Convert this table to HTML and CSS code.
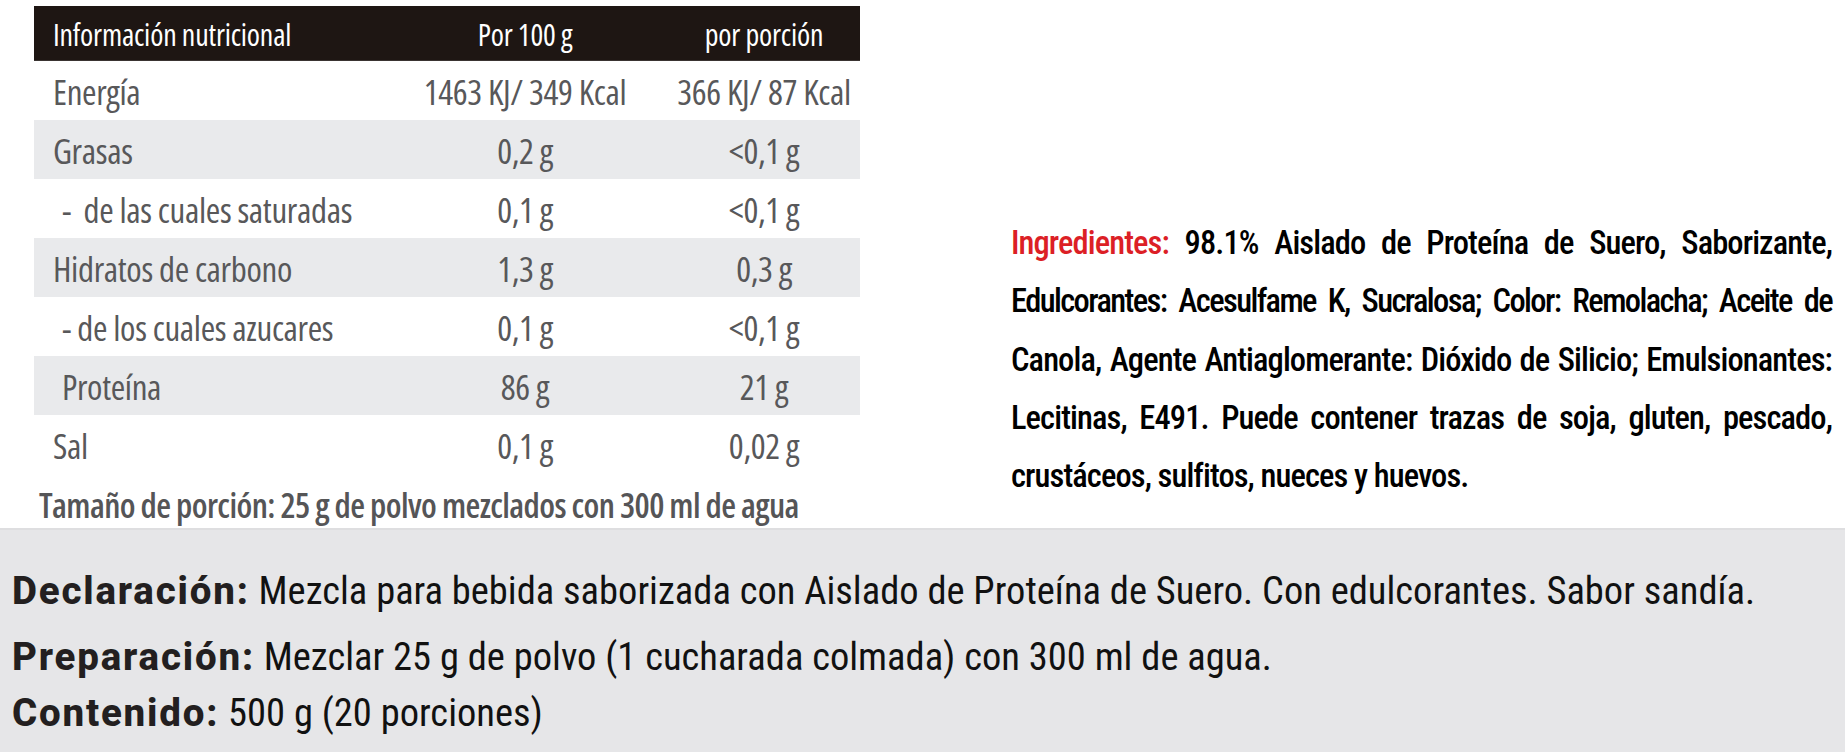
FILE: index.html
```html
<!DOCTYPE html>
<html lang="es">
<head>
<meta charset="utf-8">
<title>Información nutricional</title>
<link rel="stylesheet" href="styles.css">
</head>
<body>
<main class="top">
  <section class="nutri">
    <div class="table">
      <div class="row head"><span class="c1">Información nutricional</span><span class="c2">Por 100 g</span><span class="c3">por porción</span></div>
      <div class="row"><span class="c1">Energía</span><span class="c2">1463 KJ/ 349 Kcal</span><span class="c3">366 KJ/ 87 Kcal</span></div>
      <div class="row alt"><span class="c1">Grasas</span><span class="c2">0,2 g</span><span class="c3">&lt;0,1 g</span></div>
      <div class="row"><span class="c1 sub">-&nbsp; de las cuales saturadas</span><span class="c2">0,1 g</span><span class="c3">&lt;0,1 g</span></div>
      <div class="row alt"><span class="c1">Hidratos de carbono</span><span class="c2">1,3 g</span><span class="c3">0,3 g</span></div>
      <div class="row"><span class="c1 sub">- de los cuales azucares</span><span class="c2">0,1 g</span><span class="c3">&lt;0,1 g</span></div>
      <div class="row alt"><span class="c1 sub">Proteína</span><span class="c2">86 g</span><span class="c3">21 g</span></div>
      <div class="row"><span class="c1">Sal</span><span class="c2">0,1 g</span><span class="c3">0,02 g</span></div>
    </div>
    <p class="serving">Tamaño de porción: 25 g de polvo mezclados con 300 ml de agua</p>
  </section>
  <section class="ingr">
    <p class="ingr-text">
      <span class="line"><span class="red">Ingredientes:</span> 98.1% Aislado de Proteína de Suero, Saborizante,</span>
      <span class="line tight">Edulcorantes: Acesulfame K, Sucralosa; Color: Remolacha; Aceite de</span>
      <span class="line">Canola, Agente Antiaglomerante: Dióxido de Silicio; Emulsionantes:</span>
      <span class="line">Lecitinas, E491. Puede contener trazas de soja, gluten, pescado,</span>
      <span class="line last">crustáceos, sulfitos, nueces y huevos.</span>
    </p>
  </section>
</main>
<footer class="info">
  <p class="info-line l1"><strong>Declaración:</strong> Mezcla para bebida saborizada con Aislado de Proteína de Suero. Con edulcorantes. Sabor sandía.</p>
  <p class="info-line l2"><strong>Preparación:</strong> Mezclar 25 g de polvo (1 cucharada colmada) con 300 ml de agua.</p>
  <p class="info-line l3"><strong>Contenido:</strong> 500 g (20 porciones)</p>
</footer>
</body>
</html>
```
FILE: styles.css
```css
* { box-sizing: border-box; }
html, body { margin: 0; padding: 0; }
body {
  width: 1845px;
  height: 752px;
  overflow: hidden;
  background: #ffffff;
  font-family: "Open Sans", sans-serif;
}
p { margin: 0; }

.top {
  display: flex;
  height: 528px;
  padding-top: 6px;
}

.nutri {
  margin-left: 34px;
  width: 826px;
}

.table {
  display: flex;
  flex-direction: column;
}

.row {
  display: grid;
  grid-template-columns: 376px 230px 220px;
  align-items: center;
  height: 59px;
  padding-top: 1px;
  font-family: "Open Sans", sans-serif;
  font-stretch: 75%;
  font-size: 35px;
  font-weight: 400;
  letter-spacing: -0.35px;
  color: #58585a;
  white-space: nowrap;
}
.row.alt { background: #e9eaec; }
.row.head {
  height: 55px;
  padding-top: 2px;
  background: #1e1613;
  border-bottom: 1px solid #3a3432;
  color: #ffffff;
  font-size: 30px;
  font-weight: 500;
  letter-spacing: -0.2px;
}

.c1 { padding-left: 19px; }
.c1.sub { padding-left: 28px; }
.c2 { text-align: center; }
.c3 { text-align: center; padding-left: 28px; }

.serving {
  margin-top: 10px;
  margin-left: 5px;
  font-family: "Open Sans", sans-serif;
  font-stretch: 75%;
  font-size: 34px;
  font-weight: 600;
  line-height: 43px;
  letter-spacing: -0.6px;
  color: #555557;
  white-space: nowrap;
}

.ingr {
  margin-left: 151px;
  width: 821px;
  padding-top: 208px;
}

.ingr-text {
  font-family: "Roboto", sans-serif;
  font-stretch: 75%;
  font-size: 32.5px;
  font-weight: 500;
  line-height: 58.3px;
  letter-spacing: -0.9px;
  color: #000000;
}
.line {
  display: block;
  text-align: justify;
  text-align-last: justify;
  white-space: nowrap;
}
.line.last { text-align-last: left; }
.line.tight { letter-spacing: -1.6px; word-spacing: -5px; }
.red { color: #dc1f26; }

.info {
  height: 224px;
  background: #e6e6e8;
  border-top: 2px solid #dedee0;
  padding: 39px 0 0 12px;
  font-family: "Roboto", sans-serif;
  font-stretch: 75%;
  font-size: 38.5px;
  line-height: 44px;
  color: #111111;
  white-space: nowrap;
}
.info strong {
  font-weight: 800;
  font-stretch: 96%;
  letter-spacing: 1.8px;
  color: #231f20;
}
.l2 { margin-top: 22px; }
.l3 { margin-top: 12px; }
```
